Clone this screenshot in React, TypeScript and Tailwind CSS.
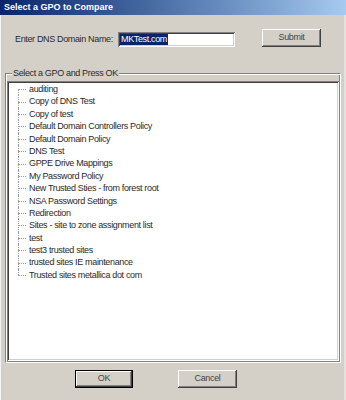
import React from "react";

const items = [
  "auditing",
  "Copy of DNS Test",
  "Copy of test",
  "Default Domain Controllers Policy",
  "Default Domain Policy",
  "DNS Test",
  "GPPE Drive Mappings",
  "My Password Policy",
  "New Trusted Sties - from forest root",
  "NSA Password Settings",
  "Redirection",
  "Sites - site to zone assignment list",
  "test",
  "test3 trusted sites",
  "trusted sites IE maintenance",
  "Trusted sites metallica dot com",
];

const raised =
  "shadow-[inset_-1px_-1px_#404040,inset_1px_1px_#ffffff,inset_-2px_-2px_#808080,inset_2px_2px_#d4d0c8]";
const sunken =
  "shadow-[inset_1px_1px_#808080,inset_-1px_-1px_#ffffff,inset_2px_2px_#404040,inset_-2px_-2px_#d4d0c8]";

export default function App() {
  return (
    <div className="w-[346px] h-[400px] bg-[#d4d0c8] flex flex-col font-['Liberation_Sans',Arial,sans-serif] text-[9px] tracking-[-0.35px] text-[#2a2a2a] overflow-hidden">
      <div className="h-[15px] flex items-center pl-[4px] bg-linear-to-r from-[#0a246a] to-[#a6caf0] text-white font-bold text-[9px] tracking-normal">
        Select a GPO to Compare
      </div>
      <div className="flex-1 flex flex-col border-l border-l-[#f4f4f4] border-r-2 border-r-[#e4e2dc]">
        <div className="mt-[14px] h-[18px] flex">
          <div className="w-[103px] ml-[14px] self-end h-[15px] leading-[15px]">
            Enter DNS Domain Name:
          </div>
          <div className={`self-end w-[117px] h-[15px] bg-white flex items-center pl-[2px] ${sunken}`}>
            <span className="bg-[#0a246a] text-white leading-[11px] h-[11px] px-[1px]">MKTest.com</span>
          </div>
          <button
            className={`ml-[27px] w-[59px] h-[18px] flex items-center justify-center text-[#444] ${raised}`}
          >
            Submit
          </button>
        </div>
        <div className="relative mt-[26px] ml-[4px] w-[336px] h-[290px] border border-t-[#808080] border-l-[#808080] border-b-white border-r-white shadow-[inset_1px_1px_#ffffff,inset_-1px_-1px_#808080] p-[1px] pt-[7px] flex flex-col">
          <span className="absolute left-[6px] top-[-7px] px-[1px] bg-[#d4d0c8] leading-[12px]">
            Select a GPO and Press OK
          </span>
          <div className={`flex-1 bg-white p-[2px] ${sunken}`}>
            {items.map((t, i) => {
              const first = i === 0;
              const last = i === items.length - 1;
              return (
                <div key={t} className="flex h-[12.4px] ml-[9px]">
                  <div className="relative w-[8px] shrink-0">
                    <div
                      className={`absolute left-0 border-l border-dotted border-[#9a9a9a] ${
                        first ? "top-1/2 h-1/2" : last ? "top-0 h-1/2" : "top-0 h-full"
                      }`}
                    />
                    <div className="absolute left-0 top-1/2 w-[8px] border-t border-dotted border-[#9a9a9a]" />
                  </div>
                  <span className="ml-[3px] leading-[12.4px] whitespace-nowrap">{t}</span>
                </div>
              );
            })}
          </div>
        </div>
        <div className="mt-[7px] h-[18px] flex">
          <button
            className={`ml-[74px] w-[58px] h-[18px] flex items-center justify-center border border-black text-[#444] ${raised}`}
          >
            OK
          </button>
          <button
            className={`ml-[45px] w-[59px] h-[18px] flex items-center justify-center text-[#444] ${raised}`}
          >
            Cancel
          </button>
        </div>
      </div>
    </div>
  );
}
